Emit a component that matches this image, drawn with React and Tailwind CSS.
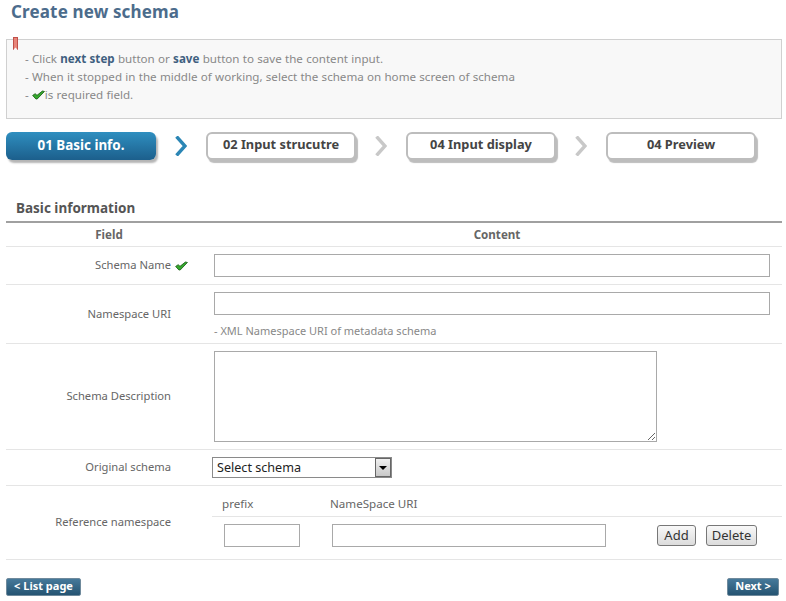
import React from 'react';

const CheckIcon = ({ className }) => (
  <svg viewBox="0 0 14 10" className={className}>
    <path d="M0.7 5.5 L3.4 3.6 L5.4 5.4 L11.2 0.7 L13.4 1.2 L5.6 9.3 L4.2 9.3 Z" fill="#35a82c" stroke="#1a5e18" strokeWidth="0.9" strokeLinejoin="round" />
  </svg>
);

const Chevron = ({ color }) => (
  <div className="w-[50px] flex justify-center">
    <svg width="12" height="20" viewBox="0 0 12 20">
      <path d="M1.5 0.5 L10 10 L1.5 19.5" fill="none" stroke={color} strokeWidth="3.4" />
    </svg>
  </div>
);

const Step = ({ label, active }) => (
  <div
    className={
      active
        ? 'w-[150px] h-[28px] pb-[2px] flex items-center justify-center rounded-md bg-gradient-to-b from-[#2f8fc0] to-[#1c5f8c] text-white font-bold text-[13.4px] shadow-[2px_3px_2px_#b5b5b5]'
        : 'w-[150px] h-[28px] pb-[2px] flex items-center justify-center rounded-md bg-white border-2 border-[#bdbdbd] text-[#444] font-bold text-[12.8px] shadow-[2px_3px_1px_#bdbdbd]'
    }
  >
    {label}
  </div>
);

const Row = ({ label, className, children }) => (
  <div className={`flex border-b border-[#e5e5e5] ${className}`}>
    <div className="w-[165px] flex items-center justify-end text-right text-[11.2px]">{label}</div>
    {children}
  </div>
);

const textBox = 'block border border-[#a9a9a9] bg-white';

export default function App() {
  return (
    <div className="w-[786px] h-[601px] overflow-hidden bg-white px-[6px] text-[11.6px] text-[#666] font-['Noto_Sans',sans-serif]">
      {/* Title */}
      <h1 className="h-[39px] pl-[5px] text-[17px] leading-[24px] font-bold text-[#4c6c8c] tracking-[0.15px]">
        Create new schema
      </h1>

      {/* Notice box */}
      <div className="relative w-[776px] h-[80px] border border-[#d0d0d0] bg-[#f8f8f8] pl-[18px] pt-[10px] leading-[18px] text-[#888] [word-spacing:0.25px]">
        <span className="absolute left-[6px] -top-[3px] w-[5px] h-[13px] bg-[#e8857a] border border-[#c0504a] [clip-path:polygon(0_0,100%_0,100%_100%,50%_80%,0_100%)]" />
        <p>
          - Click <b className="text-[#3f5f80]">next step</b> button or <b className="text-[#3f5f80]">save</b> button to save the content input.
        </p>
        <p>- When it stopped in the middle of working, select the schema on home screen of schema</p>
        <p className="flex items-center">
          - <CheckIcon className="w-[13px] h-[10px] ml-[3px]" />is required field.
        </p>
      </div>

      {/* Steps */}
      <div className="flex items-center mt-[13px]">
        <Step label="01 Basic info." active />
        <Chevron color="#2b86b5" />
        <Step label="02 Input strucutre" />
        <Chevron color="#c8c8c8" />
        <Step label="04 Input display" />
        <Chevron color="#c8c8c8" />
        <Step label="04 Preview" />
      </div>

      {/* Basic information */}
      <h2 className="mt-[38px] pl-[10px] h-[23px] text-[13.5px] leading-[20px] font-bold text-[#555]">Basic information</h2>
      <div className="w-[776px] border-t-2 border-[#a0a0a0]">
        <div className="flex h-[24px] items-center border-b border-[#e5e5e5] font-bold">
          <div className="w-[206px] text-center">Field</div>
          <div className="w-[570px] text-center">Content</div>
        </div>

        <Row label="Schema Name" className="h-[38px]">
          <div className="w-[43px] flex items-center pl-[4px]">
            <CheckIcon className="w-[13px] h-[10px]" />
          </div>
          <div className="flex items-center">
            <input className={`${textBox} w-[556px] h-[23px]`} />
          </div>
        </Row>

        <Row label="Namespace URI" className="h-[59px]">
          <div className="w-[43px]" />
          <div className="pt-[7px]">
            <input className={`${textBox} w-[556px] h-[23px]`} />
            <p className="mt-[8px] text-[11px] leading-[16px] text-[#888]">- XML Namespace URI of metadata schema</p>
          </div>
        </Row>

        <Row label="Schema Description" className="h-[106px]">
          <div className="w-[43px]" />
          <div className="pt-[7px]">
            <textarea className={`${textBox} w-[443px] h-[91px]`} />
          </div>
        </Row>

        <Row label="Original schema" className="h-[36px]">
          <div className="w-[41px]" />
          <div className="flex items-center">
            <div className="relative w-[180px] h-[21px]">
              <select className="w-full h-full appearance-none border border-[#8a8a8a] bg-white pl-[4px] pt-[1px] text-[12.6px] text-[#222] font-['Noto_Sans',sans-serif]">
                <option>Select schema</option>
              </select>
              <span className="absolute right-[1px] top-[1px] bottom-[1px] w-[16px] flex items-center justify-center border border-[#666] bg-gradient-to-b from-[#f0f0f0] to-[#c8c8c8]">
                <span className="w-0 h-0 border-x-[4px] border-x-transparent border-t-[4px] border-t-black" />
              </span>
            </div>
          </div>
        </Row>

        <Row label="Reference namespace" className="h-[74px]">
          <div className="w-[41px]" />
          <div className="flex-1">
            <div className="flex h-[31px] items-center pt-[6px] border-b border-[#e5e5e5]">
              <span className="ml-[10px] w-[108px]">prefix</span>
              <span>NameSpace URI</span>
            </div>
            <div className="flex items-start pt-[7px] h-[42px]">
              <input className={`${textBox} ml-[12px] w-[76px] h-[23px]`} />
              <input className={`${textBox} ml-[32px] w-[274px] h-[23px]`} />
              <button className="ml-[51px] mt-[1px] w-[39px] h-[21px] rounded-[3px] border border-[#777] bg-gradient-to-b from-[#f8f8f8] to-[#dcdcdc] text-[13px] text-[#333]">Add</button>
              <button className="ml-[10px] mt-[1px] w-[51px] h-[21px] rounded-[3px] border border-[#777] bg-gradient-to-b from-[#f8f8f8] to-[#dcdcdc] text-[13px] text-[#333]">Delete</button>
            </div>
          </div>
        </Row>
      </div>

      {/* Bottom buttons */}
      <div className="flex justify-between w-[773px] mt-[18px]">
        <button className="w-[75px] h-[18px] pb-[1px] flex items-center justify-center rounded-[2px] border border-[#6f8a9c] bg-gradient-to-b from-[#46799a] to-[#255472] text-white font-bold text-[11px]">&lt; List page</button>
        <button className="w-[52px] h-[18px] pb-[1px] flex items-center justify-center rounded-[2px] border border-[#6f8a9c] bg-gradient-to-b from-[#46799a] to-[#255472] text-white font-bold text-[11px]">Next &gt;</button>
      </div>
    </div>
  );
}
